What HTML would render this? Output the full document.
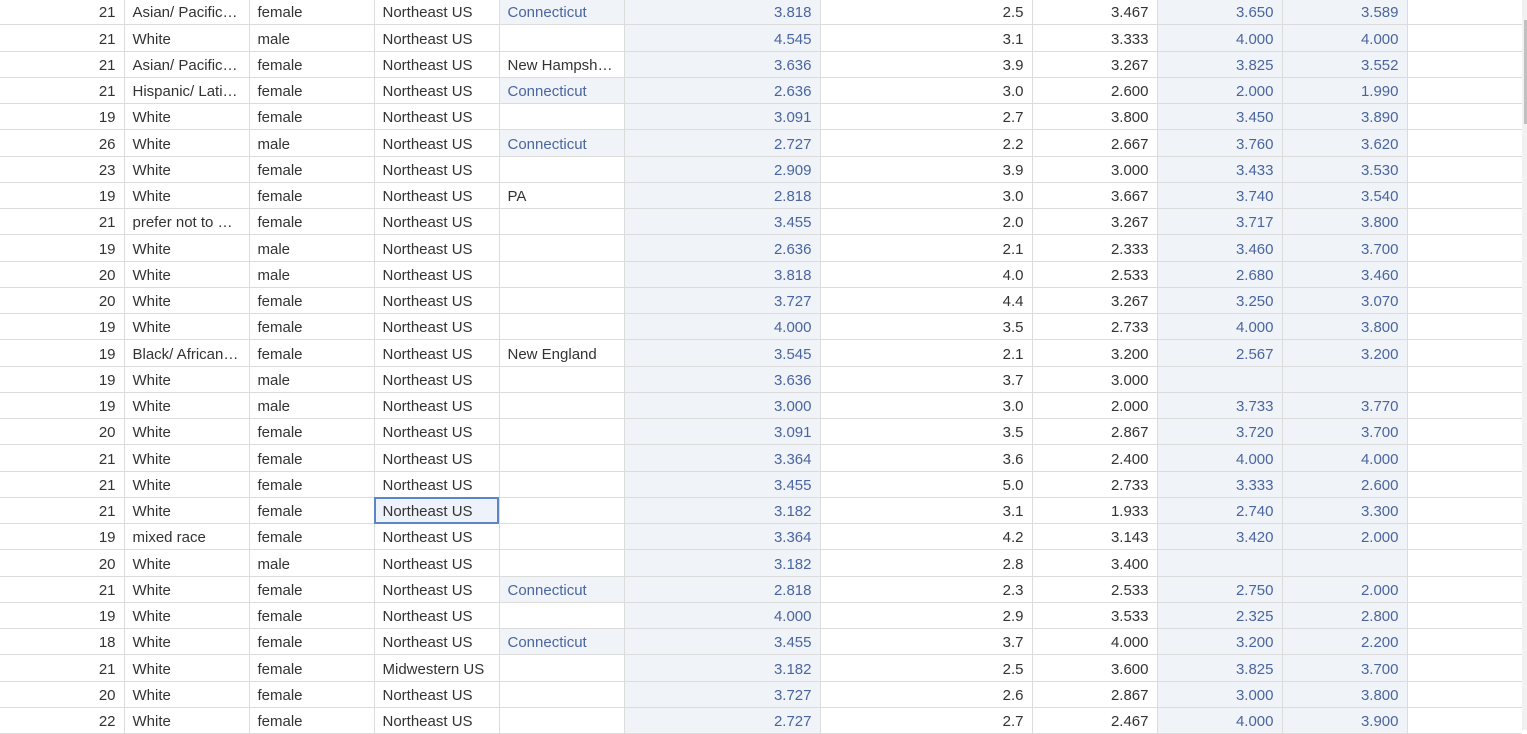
<!DOCTYPE html>
<html><head><meta charset="utf-8"><style>
body{margin:0;width:1527px;height:730px;overflow:hidden;background:#fff;font-family:"Liberation Sans",sans-serif;font-size:15px;color:#333;position:relative}
table{position:absolute;left:0;top:-1.3px;border-collapse:collapse;table-layout:fixed;width:1522px}
td{height:26.25px;padding:2px 8px 0 8px;border-right:1px solid #dcdcdc;border-bottom:1px solid #dcdcdc;white-space:nowrap;overflow:hidden;box-sizing:border-box}
td.r{text-align:right}
td.b{background:#f0f4f8;color:#4a65a0}
td.sel{outline:2px solid #5b86c5;outline-offset:-2px;background:#eef2fa}
td:last-child{border-right:none}
.track{position:absolute;left:1522px;top:0;width:5px;height:730px;background:#f1f1f1}
.thumb{position:absolute;left:1524px;top:20px;width:3px;height:104px;background:#c1c1c1}
</style></head><body>
<table>
<colgroup><col style="width:124px"><col style="width:125px"><col style="width:125px"><col style="width:125px"><col style="width:125px"><col style="width:196px"><col style="width:212px"><col style="width:125px"><col style="width:125px"><col style="width:125px"><col style="width:115px"></colgroup>
<tbody>
<tr><td class="r">21</td><td>Asian/ Pacific…</td><td>female</td><td>Northeast US</td><td class="b">Connecticut</td><td class="b r">3.818</td><td class="r">2.5</td><td class="r">3.467</td><td class="b r">3.650</td><td class="b r">3.589</td><td></td></tr>
<tr><td class="r">21</td><td>White</td><td>male</td><td>Northeast US</td><td></td><td class="b r">4.545</td><td class="r">3.1</td><td class="r">3.333</td><td class="b r">4.000</td><td class="b r">4.000</td><td></td></tr>
<tr><td class="r">21</td><td>Asian/ Pacific…</td><td>female</td><td>Northeast US</td><td>New Hampsh…</td><td class="b r">3.636</td><td class="r">3.9</td><td class="r">3.267</td><td class="b r">3.825</td><td class="b r">3.552</td><td></td></tr>
<tr><td class="r">21</td><td>Hispanic/ Lati…</td><td>female</td><td>Northeast US</td><td class="b">Connecticut</td><td class="b r">2.636</td><td class="r">3.0</td><td class="r">2.600</td><td class="b r">2.000</td><td class="b r">1.990</td><td></td></tr>
<tr><td class="r">19</td><td>White</td><td>female</td><td>Northeast US</td><td></td><td class="b r">3.091</td><td class="r">2.7</td><td class="r">3.800</td><td class="b r">3.450</td><td class="b r">3.890</td><td></td></tr>
<tr><td class="r">26</td><td>White</td><td>male</td><td>Northeast US</td><td class="b">Connecticut</td><td class="b r">2.727</td><td class="r">2.2</td><td class="r">2.667</td><td class="b r">3.760</td><td class="b r">3.620</td><td></td></tr>
<tr><td class="r">23</td><td>White</td><td>female</td><td>Northeast US</td><td></td><td class="b r">2.909</td><td class="r">3.9</td><td class="r">3.000</td><td class="b r">3.433</td><td class="b r">3.530</td><td></td></tr>
<tr><td class="r">19</td><td>White</td><td>female</td><td>Northeast US</td><td>PA</td><td class="b r">2.818</td><td class="r">3.0</td><td class="r">3.667</td><td class="b r">3.740</td><td class="b r">3.540</td><td></td></tr>
<tr><td class="r">21</td><td>prefer not to …</td><td>female</td><td>Northeast US</td><td></td><td class="b r">3.455</td><td class="r">2.0</td><td class="r">3.267</td><td class="b r">3.717</td><td class="b r">3.800</td><td></td></tr>
<tr><td class="r">19</td><td>White</td><td>male</td><td>Northeast US</td><td></td><td class="b r">2.636</td><td class="r">2.1</td><td class="r">2.333</td><td class="b r">3.460</td><td class="b r">3.700</td><td></td></tr>
<tr><td class="r">20</td><td>White</td><td>male</td><td>Northeast US</td><td></td><td class="b r">3.818</td><td class="r">4.0</td><td class="r">2.533</td><td class="b r">2.680</td><td class="b r">3.460</td><td></td></tr>
<tr><td class="r">20</td><td>White</td><td>female</td><td>Northeast US</td><td></td><td class="b r">3.727</td><td class="r">4.4</td><td class="r">3.267</td><td class="b r">3.250</td><td class="b r">3.070</td><td></td></tr>
<tr><td class="r">19</td><td>White</td><td>female</td><td>Northeast US</td><td></td><td class="b r">4.000</td><td class="r">3.5</td><td class="r">2.733</td><td class="b r">4.000</td><td class="b r">3.800</td><td></td></tr>
<tr><td class="r">19</td><td>Black/ African…</td><td>female</td><td>Northeast US</td><td>New England</td><td class="b r">3.545</td><td class="r">2.1</td><td class="r">3.200</td><td class="b r">2.567</td><td class="b r">3.200</td><td></td></tr>
<tr><td class="r">19</td><td>White</td><td>male</td><td>Northeast US</td><td></td><td class="b r">3.636</td><td class="r">3.7</td><td class="r">3.000</td><td class="b r"></td><td class="b r"></td><td></td></tr>
<tr><td class="r">19</td><td>White</td><td>male</td><td>Northeast US</td><td></td><td class="b r">3.000</td><td class="r">3.0</td><td class="r">2.000</td><td class="b r">3.733</td><td class="b r">3.770</td><td></td></tr>
<tr><td class="r">20</td><td>White</td><td>female</td><td>Northeast US</td><td></td><td class="b r">3.091</td><td class="r">3.5</td><td class="r">2.867</td><td class="b r">3.720</td><td class="b r">3.700</td><td></td></tr>
<tr><td class="r">21</td><td>White</td><td>female</td><td>Northeast US</td><td></td><td class="b r">3.364</td><td class="r">3.6</td><td class="r">2.400</td><td class="b r">4.000</td><td class="b r">4.000</td><td></td></tr>
<tr><td class="r">21</td><td>White</td><td>female</td><td>Northeast US</td><td></td><td class="b r">3.455</td><td class="r">5.0</td><td class="r">2.733</td><td class="b r">3.333</td><td class="b r">2.600</td><td></td></tr>
<tr><td class="r">21</td><td>White</td><td>female</td><td class="sel">Northeast US</td><td></td><td class="b r">3.182</td><td class="r">3.1</td><td class="r">1.933</td><td class="b r">2.740</td><td class="b r">3.300</td><td></td></tr>
<tr><td class="r">19</td><td>mixed race</td><td>female</td><td>Northeast US</td><td></td><td class="b r">3.364</td><td class="r">4.2</td><td class="r">3.143</td><td class="b r">3.420</td><td class="b r">2.000</td><td></td></tr>
<tr><td class="r">20</td><td>White</td><td>male</td><td>Northeast US</td><td></td><td class="b r">3.182</td><td class="r">2.8</td><td class="r">3.400</td><td class="b r"></td><td class="b r"></td><td></td></tr>
<tr><td class="r">21</td><td>White</td><td>female</td><td>Northeast US</td><td class="b">Connecticut</td><td class="b r">2.818</td><td class="r">2.3</td><td class="r">2.533</td><td class="b r">2.750</td><td class="b r">2.000</td><td></td></tr>
<tr><td class="r">19</td><td>White</td><td>female</td><td>Northeast US</td><td></td><td class="b r">4.000</td><td class="r">2.9</td><td class="r">3.533</td><td class="b r">2.325</td><td class="b r">2.800</td><td></td></tr>
<tr><td class="r">18</td><td>White</td><td>female</td><td>Northeast US</td><td class="b">Connecticut</td><td class="b r">3.455</td><td class="r">3.7</td><td class="r">4.000</td><td class="b r">3.200</td><td class="b r">2.200</td><td></td></tr>
<tr><td class="r">21</td><td>White</td><td>female</td><td>Midwestern US</td><td></td><td class="b r">3.182</td><td class="r">2.5</td><td class="r">3.600</td><td class="b r">3.825</td><td class="b r">3.700</td><td></td></tr>
<tr><td class="r">20</td><td>White</td><td>female</td><td>Northeast US</td><td></td><td class="b r">3.727</td><td class="r">2.6</td><td class="r">2.867</td><td class="b r">3.000</td><td class="b r">3.800</td><td></td></tr>
<tr><td class="r">22</td><td>White</td><td>female</td><td>Northeast US</td><td></td><td class="b r">2.727</td><td class="r">2.7</td><td class="r">2.467</td><td class="b r">4.000</td><td class="b r">3.900</td><td></td></tr>
</tbody></table>
<div class="track"></div><div class="thumb"></div>
</body></html>
